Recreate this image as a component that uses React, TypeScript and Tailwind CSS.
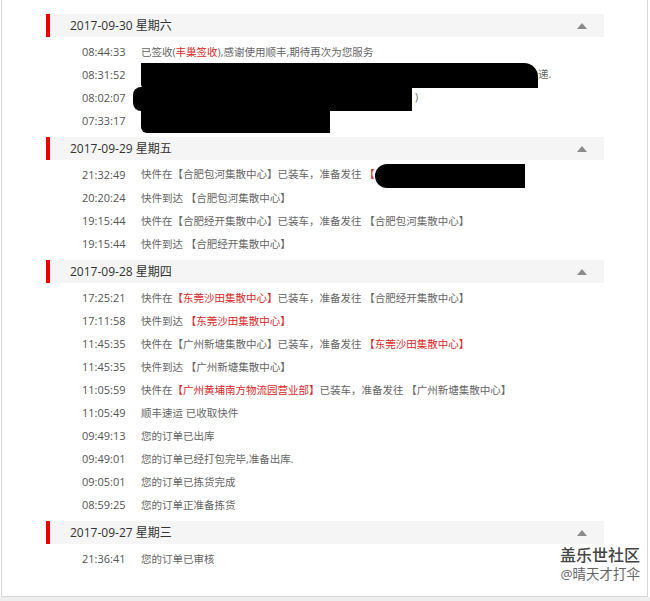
import type { ReactNode } from "react";

type Row = { time: string; content: ReactNode };
type Section = { date: string; rows: Row[] };

function Red({ children }: { children: ReactNode }) {
  return <span className="text-[#dd2727]">{children}</span>;
}

function Blot({ className }: { className: string }) {
  return <span className={`inline-block bg-black align-middle ${className}`} />;
}

const sections: Section[] = [
  {
    date: "2017-09-30 星期六",
    rows: [
      {
        time: "08:44:33",
        content: (
          <>
            已签收(<Red>丰巢签收</Red>),感谢使用顺丰,期待再次为您服务
          </>
        ),
      },
      {
        time: "08:31:52",
        content: (
          <>
            <Blot className="h-[25px] w-[397px] rounded-tr-[14px] rounded-bl-[4px]" />
            递.
          </>
        ),
      },
      {
        time: "08:02:07",
        content: (
          <>
            <Blot className="-ml-[8px] h-[24px] w-[279px] rounded-l-[8px]" />
            <span className="ml-[3px]">)</span>
          </>
        ),
      },
      {
        time: "07:33:17",
        content: <Blot className="h-[22px] w-[189px] rounded-bl-[6px]" />,
      },
    ],
  },
  {
    date: "2017-09-29 星期五",
    rows: [
      {
        time: "21:32:49",
        content: (
          <>
            快件在【合肥包河集散中心】已装车，准备发往 <Red>【</Red>
            <Blot className="h-[24px] w-[150px] rounded-l-full rounded-r-[10px]" />
          </>
        ),
      },
      { time: "20:20:24", content: "快件到达 【合肥包河集散中心】" },
      {
        time: "19:15:44",
        content: "快件在【合肥经开集散中心】已装车，准备发往 【合肥包河集散中心】",
      },
      { time: "19:15:44", content: "快件到达 【合肥经开集散中心】" },
    ],
  },
  {
    date: "2017-09-28 星期四",
    rows: [
      {
        time: "17:25:21",
        content: (
          <>
            快件在<Red>【东莞沙田集散中心】</Red>已装车，准备发往 【合肥经开集散中心】
          </>
        ),
      },
      {
        time: "17:11:58",
        content: (
          <>
            快件到达 <Red>【东莞沙田集散中心】</Red>
          </>
        ),
      },
      {
        time: "11:45:35",
        content: (
          <>
            快件在【广州新塘集散中心】已装车，准备发往 <Red>【东莞沙田集散中心】</Red>
          </>
        ),
      },
      { time: "11:45:35", content: "快件到达 【广州新塘集散中心】" },
      {
        time: "11:05:59",
        content: (
          <>
            快件在<Red>【广州黄埔南方物流园营业部】</Red>已装车，准备发往 【广州新塘集散中心】
          </>
        ),
      },
      { time: "11:05:49", content: "顺丰速运 已收取快件" },
      { time: "09:49:13", content: "您的订单已出库" },
      { time: "09:49:01", content: "您的订单已经打包完毕,准备出库." },
      { time: "09:05:01", content: "您的订单已拣货完成" },
      { time: "08:59:25", content: "您的订单正准备拣货" },
    ],
  },
  {
    date: "2017-09-27 星期三",
    rows: [{ time: "21:36:41", content: "您的订单已审核" }],
  },
];

function DaySection({ section }: { section: Section }) {
  return (
    <div>
      <div className="flex h-[23px] items-center bg-[#f5f5f5]">
        <div className="w-[4px] self-stretch bg-[#ee0000]" />
        <span className="ml-[20px] text-[12px] text-[#333]">{section.date}</span>
        <span className="ml-auto mr-[17px] h-0 w-0 border-x-[5px] border-b-[6px] border-x-transparent border-b-[#8a8a8a]" />
      </div>
      <div className="py-[4px]">
        {section.rows.map((row, i) => (
          <div key={i} className="flex h-[23px] items-center whitespace-nowrap pl-[36px]">
            <span className="w-[59px] shrink-0 text-[11px] text-[#555]">{row.time}</span>
            <span className="text-[10.5px] leading-[23px] text-[#666]">{row.content}</span>
          </div>
        ))}
      </div>
    </div>
  );
}

export default function App() {
  return (
    <div className="relative h-[601px] w-[650px] overflow-hidden bg-white font-['Open_Sans','Noto_Sans_CJK_SC',sans-serif]">
      <div className="ml-[1px] h-[597px] w-[647px] border-x border-b border-[#d9d9d9] pl-[44px] pt-[14px]">
        <div className="w-[558px]">
          {sections.map((s) => (
            <DaySection key={s.date} section={s} />
          ))}
        </div>
      </div>
      <div className="h-[4px] w-full bg-[#eeeeee]" />

      <div className="absolute right-[10px] top-[547px] text-right leading-none">
        <div className="text-[16px] font-medium text-[#444]">盖乐世社区</div>
        <div className="mt-[5px] text-[13.5px] text-[#666]">@晴天才打伞</div>
      </div>
    </div>
  );
}
